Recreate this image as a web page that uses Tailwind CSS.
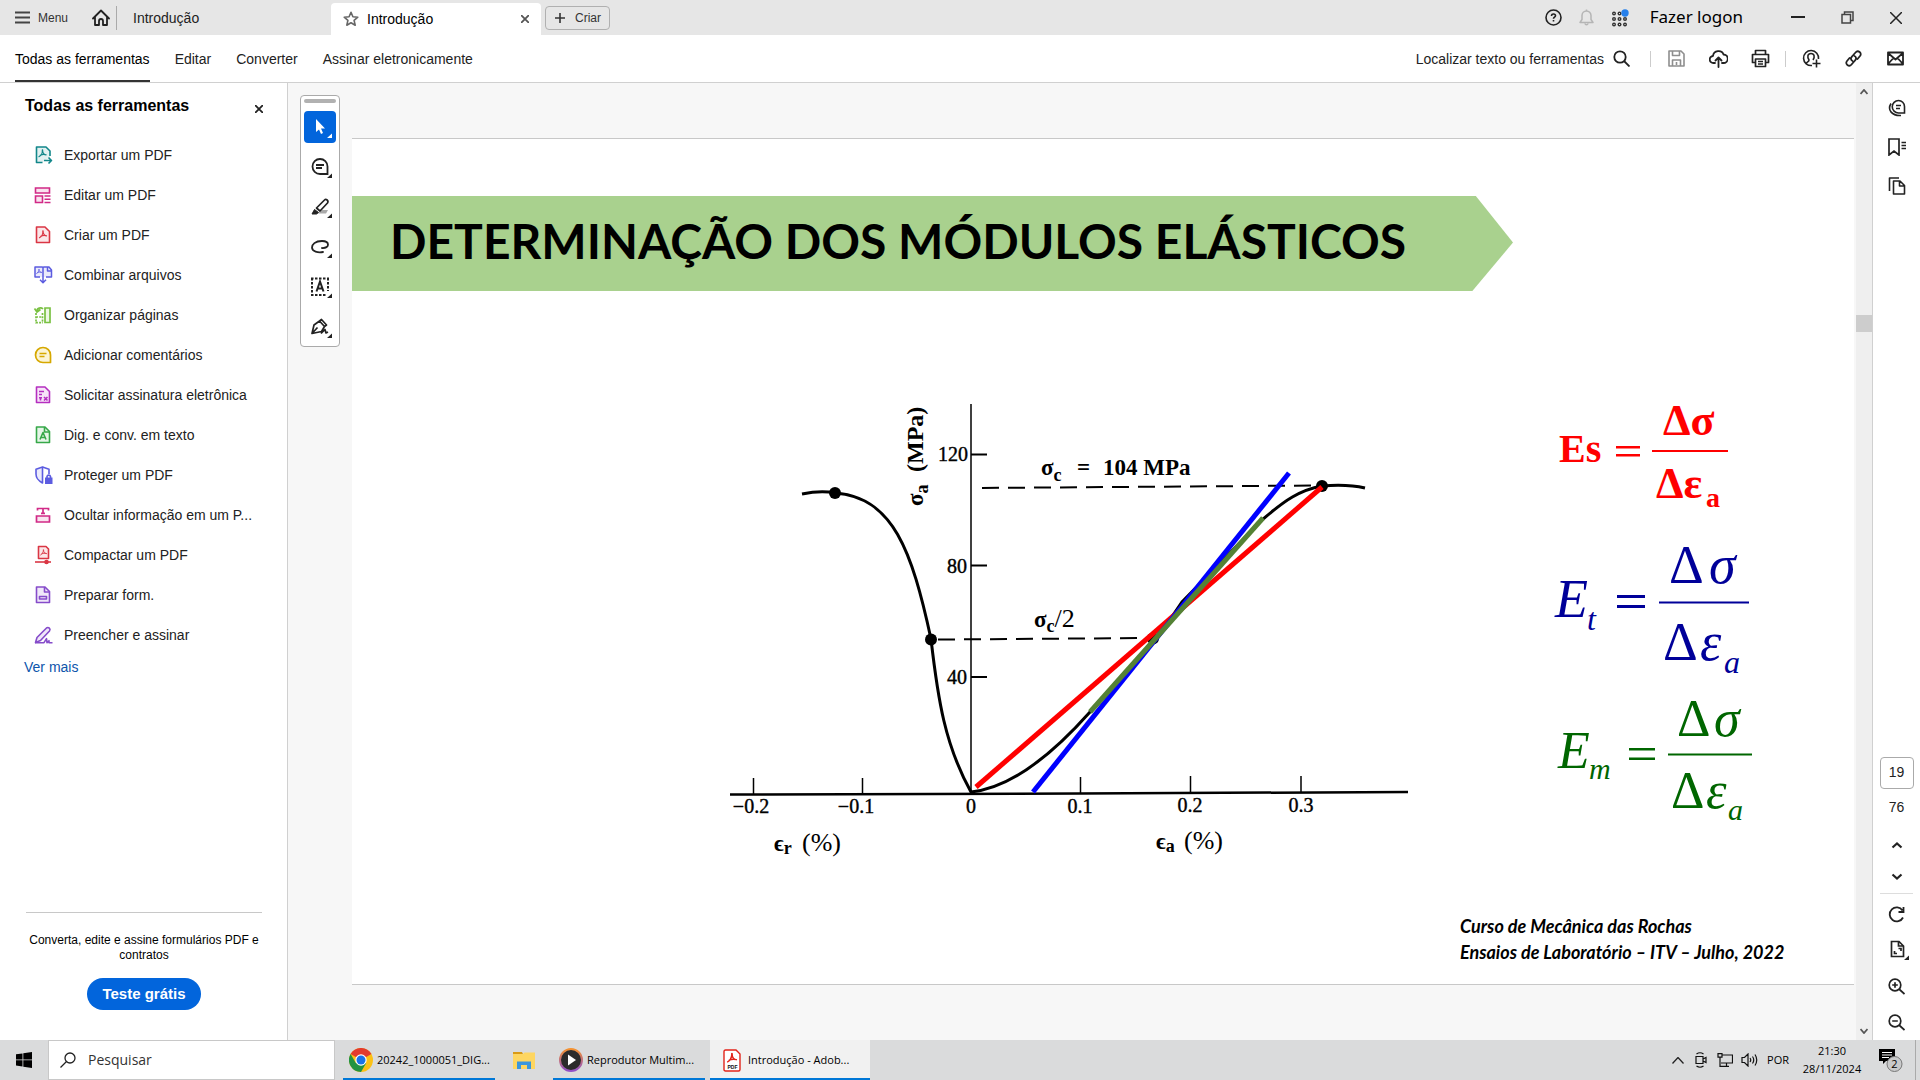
<!DOCTYPE html>
<html lang="pt-BR">
<head>
<meta charset="utf-8">
<title>Introdução</title>
<script src="https://cdn.jsdelivr.net/npm/@tailwindcss/browser@4"></script>
</head>
<body class="flex h-screen flex-col overflow-hidden bg-white font-['Liberation_Sans',sans-serif] text-sm text-[#222]">
<svg class="hidden" aria-hidden="true">
  <symbol id="acro" viewBox="0 0 10 10"><path d="M1 8.500C3 7.500 5 4.500 4.800 1.500C4.600 .5 5.400 .5 5.200 2C5 4.500 7 6.500 9 6.500M2.500 7C4.500 6 6.500 5.700 9 6.500" fill="none" stroke="currentColor" stroke-width="1.300" stroke-linecap="round"/></symbol>
</svg>

<header class="flex h-[35px] shrink-0 items-center bg-[#e6e6e6]">
  <button class="flex items-center gap-2 pl-[15px] text-xs text-[#333]">
    <svg class="size-[15px]" viewBox="0 0 15 15" fill="none" stroke="#444" stroke-width="2"><path d="M0 2.500h15M0 7.500h15M0 12.500h15"/></svg>Menu
  </button>
  <button class="ml-6 mr-[6px]" aria-label="Início">
    <svg class="size-[18px]" viewBox="0 0 18 18" fill="none" stroke="#222" stroke-width="1.800" stroke-linejoin="round" stroke-linecap="round"><path d="M1 9.500 9 1.500l8 8M3 8v8h4v-4a2 2 0 0 1 4 0v4h4V8"/></svg>
  </button>
  <nav class="flex h-full items-center self-stretch">
    <span class="h-6 w-px bg-[#aaa]"></span>
    <a href="#" class="w-[214px] pl-4 text-[#222]">Introdução</a>
    <a href="#" class="mt-[3px] flex h-8 w-[210px] items-center rounded-t bg-white pl-3 pr-3 text-black">
      <svg class="size-4" viewBox="0 0 16 16" fill="none" stroke="#666" stroke-width="1.600" stroke-linejoin="round"><path d="m8 1.300 1.900 4.500 4.900.4-3.700 3.200 1.100 4.800L8 11.700l-4.200 2.500 1.100-4.800L1.200 6.200l4.900-.4z"/></svg>
      <span class="ml-2">Introdução</span>
      <svg class="ml-auto size-2" viewBox="0 0 8 8" stroke="#555" stroke-width="1.800"><path d="m0 0 8 8M8 0 0 8"/></svg>
    </a>
  </nav>
  <button class="ml-1 flex h-6 w-[65px] items-center gap-[10px] rounded border border-[#b0b0b0] pl-[9px] text-xs text-[#333]">
    <svg class="size-[10px]" viewBox="0 0 10 10" stroke="#333" stroke-width="1.600"><path d="M5 0v10M0 5h10"/></svg>Criar
  </button>
  <div class="ml-auto flex items-center text-[#222]">
    <button class="mr-4" aria-label="Ajuda"><svg class="size-[17px]" viewBox="0 0 17 17" fill="none" stroke="currentColor" stroke-width="1.600"><circle cx="8.500" cy="8.500" r="7.500"/><path d="M6.500 7c0-2.800 4-2.500 4-.2 0 1.400-2 1.500-2 3M8.500 11v1.600"/></svg></button>
    <button class="mr-4" aria-label="Notificações"><svg class="size-[17px]" viewBox="0 0 17 17" fill="none" stroke="#b5b5b5" stroke-width="1.500" stroke-linejoin="round"><path d="M2 13.500h13l-2-3V6.500a4.500 4.500 0 0 0-9 0v4zM8.500 2V.5M7 14.500c.3 1.800 2.700 1.800 3 0"/></svg></button>
    <button class="mr-[21px]" aria-label="Aplicativos"><svg class="size-[18px]" viewBox="0 0 18 18" fill="#333"><g><circle cx="3" cy="4.500" r="2"/><circle cx="8.500" cy="4.500" r="2"/><circle cx="3" cy="10" r="2"/><circle cx="8.500" cy="10" r="2"/><circle cx="14" cy="10" r="2"/><circle cx="3" cy="15.500" r="2"/><circle cx="8.500" cy="15.500" r="2"/><circle cx="14" cy="15.500" r="2"/></g><path fill="#e6e6e6" d="M2.500 4h1v1h-1zM8 4h1v1H8zM2.500 9.500h1v1h-1zM8 9.500h1v1H8zM13.500 9.500h1v1h-1zM2.500 15h1v1h-1zM8 15h1v1H8zM13.500 15h1v1h-1z"/><circle cx="14" cy="4" r="3.700" fill="#2680eb"/></svg></button>
    <a href="#" class="mr-12 font-['Noto_Sans',sans-serif] text-[17px] text-black">Fazer logon</a>
    <button class="mr-9" aria-label="Minimizar"><svg class="size-[14px]" viewBox="0 0 14 14" stroke="#222" stroke-width="2"><path d="M0 6h14"/></svg></button>
    <button class="mr-9" aria-label="Restaurar"><svg class="size-[13px]" viewBox="0 0 13 13" fill="none" stroke="#444" stroke-width="1.500"><path d="M1 3.500h8.500V12H1zM3.500 3V1H12v8.500h-2.500"/></svg></button>
    <button class="mr-[18px]" aria-label="Fechar"><svg class="size-3" viewBox="0 0 12 12" stroke="#222" stroke-width="1.500"><path d="m0 0 12 12M12 0 0 12"/></svg></button>
  </div>
</header>

<div class="flex h-12 shrink-0 items-center border-b border-[#d0d0d0]">
  <nav class="ml-[15px] flex h-full items-center gap-[25px]">
    <a href="#" class="flex h-full items-center border-b-2 border-[#333] pt-[2px] text-black">Todas as ferramentas</a>
    <a href="#">Editar</a><a href="#">Converter</a><a href="#">Assinar eletronicamente</a>
  </nav>
  <div class="ml-auto flex h-full items-center pr-1">
    <button class="mr-5 flex items-center gap-[9px]">Localizar texto ou ferramentas
      <svg class="size-[17px]" viewBox="0 0 17 17" fill="none" stroke="#222" stroke-width="1.800"><circle cx="7" cy="7" r="5.700"/><path d="m11 11 5.500 5.500"/></svg></button>
    <span class="mr-1 h-4 w-px bg-[#ccc]"></span>
    <button class="flex w-[42px] justify-center" aria-label="Salvar"><svg class="size-[17px]" viewBox="0 0 17 17" fill="none" stroke="#8e8e8e" stroke-width="1.600" stroke-linejoin="round"><path d="M1 1h12l3 3v12H1zM4.500 1v4.500h7V1M4.500 16v-6h8v6M8.500 12v3"/></svg></button>
    <button class="flex w-[42px] justify-center" aria-label="Enviar para a nuvem"><svg class="size-[19px]" viewBox="0 0 19 19" fill="none" stroke="#222" stroke-width="1.800" stroke-linecap="round" stroke-linejoin="round"><path d="M6 14H4.500A3.500 3.500 0 0 1 4 7c.5-6 9-6.500 10.500-1.500A4 4 0 0 1 14.500 14H13M9.500 18V9M6.500 11.500l3-3 3 3"/></svg></button>
    <button class="flex w-[42px] justify-center" aria-label="Imprimir"><svg class="size-[19px]" viewBox="0 0 19 19" fill="none" stroke="#222" stroke-width="1.700" stroke-linejoin="round"><path d="M4.500 5.500v-4h10v4M4 13.500H1.500v-8h16v8H15M4.500 10h10v7.500h-10zM7 12.500h5M7 15h5"/></svg></button>
    <span class="mx-1 h-4 w-px bg-[#ccc]"></span>
    <button class="flex w-[42px] justify-center" aria-label="Compartilhar com pessoas"><svg class="size-[19px]" viewBox="0 0 19 19" fill="none" stroke="#222" stroke-width="1.600"><path d="M10 16.500A7.500 7.500 0 1 1 16.500 10M4 14.500c1-2 3-1.500 3-3.500C5 8 5.500 4.500 9 4.500s4 3.500 2 6.500M14.500 10.500v8M10.500 14.500h8"/></svg></button>
    <button class="flex w-[42px] justify-center" aria-label="Link"><svg class="size-[17px]" viewBox="0 0 17 17" fill="none" stroke="#222" stroke-width="1.800" stroke-linecap="round"><path d="M7.500 11C5.500 10 5.500 8 7 6.500l3.500-4C13-.5 17.500 3 15 6l-2.500 3M9.500 6c2 1 2 3 .5 4.500l-3.500 4C4 17.500-.5 14 2 11l2.500-3"/></svg></button>
    <button class="flex w-[42px] justify-center" aria-label="E-mail"><svg class="size-[17px]" viewBox="0 0 17 17" fill="none" stroke="#222" stroke-width="1.800" stroke-linejoin="round"><path d="M1 2.500h15v12H1zM1 3l7.500 6.500L16 3M1 14l5.500-6M16 14l-5.500-6"/></svg></button>
  </div>
</div>

<main class="flex min-h-0 flex-1">
  <aside class="flex w-[288px] shrink-0 flex-col border-r border-[#d0d0d0] px-6">
    <div class="flex h-[52px] items-center justify-between pb-[7px]">
      <h2 class="pl-[1px] text-base font-bold text-black">Todas as ferramentas</h2>
      <button class="pt-[6px]" aria-label="Fechar painel"><svg class="size-2" viewBox="0 0 8 8" stroke="#222" stroke-width="1.800"><path d="m0 0 8 8M8 0 0 8"/></svg></button>
    </div>
    <ul class="pl-[9px] [&_a]:flex [&_a]:h-10 [&_a]:items-center [&_a]:gap-[11px] [&_a]:whitespace-nowrap [&_svg]:size-5 [&_svg]:shrink-0">
      <li><a href="#"><svg class="text-[#12878a]" viewBox="0 0 20 20" fill="none" stroke="currentColor" stroke-width="1.600" stroke-linejoin="round"><path fill="#e3f1f1" stroke="none" d="M3.500 2H13l4 4v6l-7 5H3.500z"/><path d="M9.500 17.500H3.500V2H13l4 4v5"/><use href="#acro" x="5" y="4" width="9" height="9"/><path d="M11 15.500h7M15.500 12.500l3 3-3 3"/></svg>Exportar um PDF</a></li>
      <li><a href="#"><svg class="text-[#d12a87]" viewBox="0 0 20 20" fill="none" stroke="currentColor" stroke-width="1.600"><path fill="#f9e3ef" d="M2.500 3h14v5h-14zM2.500 11h7v6.500h-7z"/><path d="M11.500 11h6M11.500 14.200h6M11.500 17.500h6"/></svg>Editar um PDF</a></li>
      <li><a href="#"><svg class="text-[#da3644]" viewBox="0 0 20 20" fill="none" stroke="currentColor" stroke-width="1.600" stroke-linejoin="round"><path fill="#fbe6e8" d="M3.500 2H12l4.500 4.500V17.500h-13z"/><use href="#acro" x="5.500" y="5" width="9" height="9"/></svg>Criar um PDF</a></li>
      <li><a href="#"><svg class="text-[#5c5ce0]" viewBox="0 0 20 20" fill="none" stroke="currentColor" stroke-width="1.500" stroke-linejoin="round"><path fill="#ebebfb" stroke="none" d="M2 2h14.500l2 3v7H2z"/><path d="M7 12H2V2h7.500l.5 1 .5-1H16l2.500 3v7H13M10 3v14.500M7 14.800l3 3 3-3M14.500 2v4h4"/><use href="#acro" x="3" y="3.500" width="6" height="6"/></svg>Combinar arquivos</a></li>
      <li><a href="#"><svg class="text-[#7ac143]" viewBox="0 0 20 20" fill="none" stroke="currentColor" stroke-width="1.700"><path fill="#eef8e6" d="M12 3h5v14.500h-5z"/><path d="M4 6c0-3 4-4 6-2M1.500 3.500 4 7l3.500-2.500"/><path stroke-dasharray="2 1.200" d="M3 8v9.700h7M3 12h7M9.500 8v9"/></svg>Organizar páginas</a></li>
      <li><a href="#"><svg class="text-[#d6a800]" viewBox="0 0 20 20" fill="none" stroke="currentColor" stroke-width="1.700" stroke-linejoin="round"><path fill="#fbf4d6" d="M10 2.500a7.500 7.500 0 0 0 0 15h7.500V10A7.500 7.500 0 0 0 10 2.500z"/><path d="M6.500 8.500h7M6.500 11.500h5"/></svg>Adicionar comentários</a></li>
      <li><a href="#"><svg class="text-[#b52fc0]" viewBox="0 0 20 20" fill="none" stroke="currentColor" stroke-width="1.600" stroke-linejoin="round"><path fill="#f7e4f8" d="M3.500 2H12l4.500 4.500V17.500h-13z"/><path d="M6 6.500h5M6 9.500h3M11 12l3.500 3.500M14.500 12 11 15.500M6 12.800h3M7.500 12v3.500" /></svg>Solicitar assinatura eletrônica</a></li>
      <li><a href="#"><svg class="text-[#37a849]" viewBox="0 0 20 20" fill="none" stroke="currentColor" stroke-width="1.600" stroke-linejoin="round"><path fill="#e6f5e8" d="M3.500 2H12l4.500 4.500V17.500h-13z"/><path d="M11.500 2v5h5M7 14.500l3-7 3 7M8 12.500h4"/></svg>Dig. e conv. em texto</a></li>
      <li><a href="#"><svg class="text-[#5c5ce0]" viewBox="0 0 20 20" fill="none" stroke="currentColor" stroke-width="1.600" stroke-linejoin="round"><path fill="#ebebfb" d="M9.500 18C4.500 15 3 13 3 9V4.200L9.500 2z"/><path d="M9.500 2 16 4.200V9"/><path d="M14 13v-1.500a1.800 1.800 0 0 1 3.500 0V13"/><path fill="currentColor" stroke="none" d="M12 12.500h7.500V19H12z"/></svg>Proteger um PDF</a></li>
      <li><a href="#"><svg class="text-[#d12a87]" viewBox="0 0 20 20" fill="none" stroke="currentColor" stroke-width="1.700"><path d="M4.500 5.500V3.500h11v2M10 3.500V8M8 8.300h4"/><path fill="#f9e3ef" d="M3.500 11h13v6h-13z"/></svg>Ocultar informação em um P...</a></li>
      <li><a href="#"><svg class="text-[#da3644]" viewBox="0 0 20 20" fill="none" stroke="currentColor" stroke-width="1.600" stroke-linejoin="round"><path fill="#fbe6e8" d="M5.500 1.500H13L15.500 4v9.500h-10z"/><use href="#acro" x="7" y="4" width="7" height="7"/><path d="M2 17h16"/><circle cx="13.500" cy="17" r="1.500" fill="currentColor"/></svg>Compactar um PDF</a></li>
      <li><a href="#"><svg class="text-[#864cca]" viewBox="0 0 20 20" fill="none" stroke="currentColor" stroke-width="1.600" stroke-linejoin="round"><path fill="#f0e8f9" d="M3.500 2H12l4.500 4.500V17.500h-13z"/><path d="M11.500 2v5h5M6.500 11.500h7V14h-7z"/></svg>Preparar form.</a></li>
      <li><a href="#"><svg class="text-[#864cca]" viewBox="0 0 20 20" fill="none" stroke="currentColor" stroke-width="1.600" stroke-linejoin="round"><path fill="#f0e8f9" d="M2.500 17.500 4 12.500 13.500 3C15.500 1.500 18 4 16.500 6L7.500 15.500z"/><path d="M2 17.700h9l2.500-4 .5 4 2-2v2h3.500"/></svg>Preencher e assinar</a></li>
    </ul>
    <a href="#" class="mt-[2px] text-[#0d55ab]">Ver mais</a>
    <div class="mt-auto ml-[2px] mb-[30px] flex w-[236px] flex-col items-center border-t border-[#c8c8c8] pt-5 text-center text-xs text-black">
      <p class="-mx-2 leading-[15px]">Converta, edite e assine formulários PDF e<br>contratos</p>
      <button class="mt-[15px] h-8 w-[114px] rounded-full bg-[#0265dc] text-[15px] font-bold text-white">Teste grátis</button>
    </div>
  </aside>

  <section class="flex min-w-0 flex-1 bg-[#f7f7f7]">
    <div class="w-16 shrink-0 pt-3 pl-3">
      <div class="flex h-[252px] w-10 flex-col items-center gap-2 rounded border border-[#aaa] bg-white pt-[3px] text-[#222] [&_button]:flex [&_button]:size-8 [&_button]:shrink-0 [&_button]:items-center [&_button]:justify-center [&_svg]:size-6" role="toolbar">
        <span class="h-1 w-8 shrink-0 rounded-sm bg-[#b1b1b1]"></span>
        <button class="rounded-sm bg-[#0265dc] text-white" aria-label="Selecionar"><svg viewBox="0 0 24 24" fill="currentColor"><path d="M8 4v13l3-2.500 2 4.500 2-1-2-4.500h4zM24 18.500V23h-5z"/></svg></button>
        <button aria-label="Comentário"><svg viewBox="0 0 24 24" fill="none" stroke="currentColor" stroke-width="1.800"><path d="M12 4a7.500 7.500 0 0 0 0 15h7.500v-7.500A7.500 7.500 0 0 0 12 4zM8 10h8M8 13h6"/><path fill="currentColor" stroke="none" d="M24 18.500V23h-5z"/></svg></button>
        <button aria-label="Realçar"><svg viewBox="0 0 24 24" fill="none" stroke="currentColor" stroke-width="1.700" stroke-linejoin="round"><path fill="#aaa" stroke="none" d="m14 15 6 0-2 3.500h-8z"/><path fill="#fff" d="m8.500 13 8-8c1.500-1.500 4.500.5 3 3l-7.500 8z"/><path fill="currentColor" stroke-width="1" d="m4 19 2.500-4.500 4 3-2 1.500z"/><path fill="currentColor" stroke="none" d="M24 18.500V23h-5z"/></svg></button>
        <button aria-label="Desenhar"><svg viewBox="0 0 24 24" fill="none" stroke="currentColor" stroke-width="1.800" stroke-linecap="round"><path d="M14 13c8 .5 8-7 0-7-7 0-10 3.500-10 6.500 0 4 6 5.500 11 4.500"/><path fill="currentColor" stroke="none" d="M24 18.500V23h-5z"/></svg></button>
        <button aria-label="Texto"><svg viewBox="0 0 24 24" fill="none" stroke="currentColor" stroke-width="2"><path stroke-dasharray="2.500 1.500" d="M3 3.500h18M3 20h15M4 3v17M20 3v13"/><path d="m8.500 16.500 3.500-10 3.500 10M10 13.500h4"/><path fill="currentColor" stroke="none" d="M24 18.500V23h-5z"/></svg></button>
        <button aria-label="Assinar"><svg viewBox="0 0 24 24" fill="none" stroke="currentColor" stroke-width="1.700" stroke-linejoin="round"><path d="M4 18.500 6 10l5.500-4 5 5.500-3 5zM4 18.500l5.500-6M11.500 6l2-1.500 5 5.500-2 1.500M13 18.500l4-4 1 3.500 2-1"/><path fill="currentColor" stroke="none" d="M24 18.500V23h-5z"/></svg></button>
      </div>
    </div>

    <article class="mt-[55px] mb-[55px] flex min-w-0 flex-1 flex-col border-y border-[#c8c8c8] bg-white pt-[57px] text-black">
      <h1 class="flex h-[95px] w-[1161px] items-center bg-[#a9d18e] pb-[5px] pl-[38px] font-['Lato',sans-serif] text-[48px] font-bold whitespace-nowrap [clip-path:polygon(0_0,96.8%_0,100%_49%,96.500%_100%,0_100%)]">DETERMINAÇÃO DOS MÓDULOS ELÁSTICOS</h1>
      <div class="mt-[104px] flex pl-[368px] font-['Liberation_Serif',serif]">
        <svg class="h-[470px] w-[700px] shrink-0" viewBox="720 395 700 470" fill="none" stroke="#000" role="img" aria-label="Curvas de tensão e deformação">
          <path stroke-width="1.500" d="M971 404V794"/>
          <path stroke-width="2.500" d="M730 794.500 1080 793.500 1408 792"/>
          <path stroke-width="2" d="M971 454.500h16M971 565.500h16M971 677h16"/>
          <path stroke-width="1.500" d="M753.500 778v16M862.500 778v16M1080.500 777v16M1190.500 776v16M1301 776v16"/>
          <path stroke-width="2" stroke-dasharray="17 9" d="M982 488 1318 485.500M938 639.500 1150 638"/>
          <path stroke-width="3" d="M802 494C812 492 825 491 835 493C893 497 912 551 931 639C938 700 945 745 971 792C1010 788 1050 757 1090 712L1156 640L1182 602L1262 520C1285 500 1300 490 1322 486C1335 485 1352 485 1365 488"/>
          <g fill="#000" stroke="none"><circle cx="835" cy="493" r="6"/><circle cx="931" cy="639.500" r="6"/><circle cx="1322" cy="486" r="6"/><circle cx="1153" cy="638.500" r="6"/></g>
          <path stroke="#f00" stroke-width="5" d="M976 787 1322 487"/>
          <path stroke="#00f" stroke-width="5" d="M1033 792 1289 473"/>
          <path stroke="#548235" stroke-width="5" d="M1090 712 1263 518"/>
          <g fill="#000" stroke-width=".4" font-size="20" text-anchor="middle">
            <text x="751" y="813">−0.2</text><text x="856" y="813">−0.1</text><text x="971" y="813">0</text><text x="1080" y="813">0.1</text><text x="1190" y="812">0.2</text><text x="1301" y="812">0.3</text>
            <g text-anchor="end"><text x="968" y="461">120</text><text x="967" y="573">80</text><text x="967" y="684">40</text></g>
          </g>
          <g fill="#000" stroke="none" font-size="23" font-weight="bold">
            <text x="1041" y="475">σ<tspan font-size="18" dy="6">c</tspan></text><text x="1077" y="475">=</text><text x="1103" y="475">104 MPa</text>
            <text x="1034" y="627">σ<tspan font-size="18" dy="5">c</tspan><tspan dy="-5" font-size="26" font-weight="normal">/2</tspan></text>
            <text x="774" y="851">ϵ<tspan font-size="18" dy="3">r</tspan></text><text x="802" y="851" font-weight="normal" font-size="26">(%)</text>
            <text x="1156" y="849">ϵ<tspan font-size="18" dy="3">a</tspan></text><text x="1184" y="849" font-weight="normal" font-size="26">(%)</text>
            <text transform="translate(923 506) rotate(-90)">σ<tspan font-size="18" dy="5">a</tspan><tspan dy="-5" x="34" font-size="24">(MPa)</tspan></text>
          </g>
        </svg>
        <svg class="ml-[110px] h-[430px] w-[250px] shrink-0" viewBox="1530 395 250 430" stroke="none" role="img" aria-label="Fórmulas dos módulos elásticos">
          <g fill="#f00" font-weight="bold" font-size="44">
            <text x="1559" y="462" font-size="40">Es</text>
            <path d="M1616 446h24v2.500h-24zM1616 454h24v2.500h-24zM1652 450h76v2h-76z"/>
            <text x="1663" y="435">Δσ</text><text x="1656" y="498">Δε</text><text x="1706" y="507" font-size="28">a</text>
          </g>
          <g fill="#009" font-size="54">
            <text x="1555" y="617" font-style="italic">E</text><text x="1587" y="630" font-size="32" font-style="italic">t</text>
            <path d="M1617 595h28v3h-28zM1617 605h28v3h-28zM1659 601.500h90v2h-90z"/>
            <text x="1669" y="583">Δ</text><text x="1709" y="583" font-style="italic">σ</text>
            <text x="1663" y="660">Δ</text><text x="1700" y="660" font-style="italic">ε</text><text x="1724" y="673" font-size="32" font-style="italic">a</text>
          </g>
          <g fill="#060" font-size="52">
            <text x="1558" y="768" font-style="italic">E</text><text x="1589" y="779" font-size="30" font-style="italic">m</text>
            <path d="M1629 748h26v2.500h-26zM1629 757.500h26v2.500h-26zM1668 753.500h84v2h-84z"/>
            <text x="1677" y="736">Δ</text><text x="1714" y="736" font-style="italic">σ</text>
            <text x="1671" y="808">Δ</text><text x="1706" y="808" font-style="italic">ε</text><text x="1728" y="820" font-size="30" font-style="italic">a</text>
          </g>
        </svg>
      </div>
      <footer class="mt-auto mr-[64px] mb-[19px] w-[330px] self-end font-['Lato',sans-serif] text-[18px] leading-[26px] font-bold whitespace-nowrap italic">
        <p>Curso de Mecânica das Rochas</p>
        <p>Ensaios de Laboratório – ITV – Julho, 2022</p>
      </footer>
    </article>

    <div class="ml-[2px] flex w-4 shrink-0 flex-col items-center bg-[#efefef] py-[6px]">
      <svg class="h-[6px] w-2" viewBox="0 0 8 6" fill="none" stroke="#555" stroke-width="1.800"><path d="m.5 5 3.500-4 3.500 4"/></svg>
      <span class="mt-[220px] h-[17px] w-full bg-[#cdcdcd]"></span>
      <svg class="mt-auto h-[6px] w-2" viewBox="0 0 8 6" fill="none" stroke="#555" stroke-width="1.800"><path d="m.5 1 3.500 4 3.500-4"/></svg>
    </div>
  </section>

  <aside class="flex w-12 shrink-0 flex-col items-center border-l border-[#d0d0d0] text-[#222] [&_button]:flex [&_button]:w-full [&_button]:shrink-0 [&_button]:items-center [&_button]:justify-center">
    <div class="flex flex-col gap-[3px] self-stretch pt-[7px]">
      <button class="h-9" aria-label="Comentários"><svg class="size-[18px]" viewBox="0 0 18 18" fill="none" stroke="currentColor" stroke-width="1.600"><path d="M10.500 1.500a6 6 0 0 0 0 12.500h6V7.500a6 6 0 0 0-6-6zM8 6.500h5M8 9.500h4M3 4.500C-1 11 4 17 13 16.500"/></svg></button>
      <button class="h-9" aria-label="Marcadores"><svg class="size-[18px]" viewBox="0 0 18 18" fill="none" stroke="currentColor" stroke-width="1.700"><path d="M1 1h10v16l-5-4-5 4zM13.500 4.500H18M13.500 7.500H18M13.500 10.500H18"/></svg></button>
      <button class="h-9" aria-label="Páginas"><svg class="size-[18px]" viewBox="0 0 18 18" fill="none" stroke="currentColor" stroke-width="1.600" stroke-linejoin="round"><path d="M5.500 4h6.500l4.500 4.500v8.500h-11zM11.500 4v5h5M11 1H1.500v13"/></svg></button>
    </div>
    <input value="19" aria-label="Página atual" class="mt-auto h-8 w-[34px] shrink-0 rounded border border-[#aaa] bg-white pb-[2px] text-center text-sm leading-5">
    <span class="mt-[10px] leading-4">76</span>
    <div class="mt-[14px] self-stretch">
      <button class="h-8" aria-label="Página anterior"><svg class="h-2 w-3" viewBox="0 0 12 8" fill="none" stroke="currentColor" stroke-width="2.200"><path d="m1.500 6.500 4.500-4 4.500 4"/></svg></button>
      <button class="h-8" aria-label="Próxima página"><svg class="h-2 w-3" viewBox="0 0 12 8" fill="none" stroke="currentColor" stroke-width="2.200"><path d="m1.500 1.500 4.500 4 4.500-4"/></svg></button>
    </div>
    <div class="w-[33px] border-t border-[#ddd] pt-[2px]">
      <button class="h-9" aria-label="Girar"><svg class="size-[17px]" viewBox="0 0 17 17" fill="none" stroke="currentColor" stroke-width="1.800"><path d="M15 11.500A7 7 0 1 1 14.500 4.500M15.500 1v5h-5"/></svg></button>
      <button class="h-9" aria-label="Exibição da página"><svg class="ml-1 size-5 shrink-0" viewBox="0 0 20 20" fill="none" stroke="currentColor" stroke-width="1.700"><path d="M2.500 1.500H10l4.500 4.500v10.500h-12zM9.500 1.500V6h5M9.500 8.500H12V11M5.500 11v2.500H8"/><path fill="currentColor" stroke="none" d="M20 15.500V20h-5z"/></svg></button>
      <button class="h-9" aria-label="Mais zoom"><svg class="size-[17px]" viewBox="0 0 17 17" fill="none" stroke="currentColor" stroke-width="1.700"><circle cx="7" cy="7" r="5.800"/><path d="m11 11 5.500 5M7 4.200v5.600M4.200 7h5.600"/></svg></button>
      <button class="h-9" aria-label="Menos zoom"><svg class="size-[17px]" viewBox="0 0 17 17" fill="none" stroke="currentColor" stroke-width="1.700"><circle cx="7" cy="7" r="5.800"/><path d="m11 11 5.500 5M4.200 7h5.600"/></svg></button>
    </div>
  </aside>
</main>

<footer class="flex h-10 shrink-0 items-center bg-[#dadbdc] font-['Open_Sans',sans-serif] text-[11px] text-black">
  <button class="flex w-12 justify-center" aria-label="Iniciar"><svg class="size-4" viewBox="0 0 16 16"><path d="M0 2.300 6.500 1.400v6.100H0zM7.300 1.300 16 0v7.500H7.300zM0 8.300h6.500v6.200L0 13.600zM7.300 8.300H16V16l-8.700-1.300z"/></svg></button>
  <label class="flex h-10 w-[287px] items-center gap-3 border border-[#c8c8c8] bg-white pl-[11px]">
    <svg class="size-4" viewBox="0 0 16 16" fill="none" stroke="#222" stroke-width="1.300"><circle cx="10" cy="6" r="5"/><path d="M6.500 9.500.5 15.500"/></svg>
    <input type="search" placeholder="Pesquisar" aria-label="Pesquisar" class="w-40 bg-transparent text-sm outline-none placeholder:text-[#333]">
  </label>
  <nav class="flex h-full items-center [&_a]:flex [&_a]:h-full [&_a]:items-center [&_a]:whitespace-nowrap">
    <a href="#" class="ml-2 w-[152px] gap-1 border-b-2 border-[#0078d7] pt-[2px] pl-[6px]">
      <svg class="size-6 shrink-0" viewBox="0 0 24 24"><circle cx="12" cy="12" r="12" fill="#fbc116"/><path d="M12 12 1.600 6A12 12 0 0 1 22.400 6z" fill="#e33b2e"/><path d="M1.600 6A12 12 0 0 0 12 24l5.200-9L12 12 6.800 15z" fill="#229342"/><circle cx="12" cy="12" r="5.700" fill="#fff"/><circle cx="12" cy="12" r="4.500" fill="#1a73e8"/></svg>20242_1000051_DIG...</a>
    <a href="#" class="w-[58px] justify-center" aria-label="Explorador de Arquivos"><svg class="h-[19px] w-[22px]" viewBox="0 0 22 19"><path d="M0 1h9l1 2H0z" fill="#d99a16"/><path d="M0 3h10l1.500-1.500H22V18H0z" fill="#fed661"/><path d="M4 18v-7.500h14V18h-4v-4H8v4z" fill="#3a96dd"/></svg></a>
    <a href="#" class="w-[152px] gap-1 border-b-2 border-[#0078d7] pt-[2px] pl-[6px]">
      <svg class="size-6 shrink-0" viewBox="0 0 24 24"><defs><linearGradient id="ring" x2="0" y2="1"><stop stop-color="#f59331"/><stop offset="1" stop-color="#9050c8"/></linearGradient></defs><circle cx="12" cy="12" r="11" fill="#2b2b2b" stroke="url(#ring)" stroke-width="2"/><path d="M9 6.500v11l8-5.500z" fill="#fff"/></svg>Reprodutor Multim...</a>
    <a href="#" class="ml-[5px] w-40 gap-[7px] border-b-2 border-[#0078d7] bg-[#f1f1f1] pt-[2px] pl-[13px]">
      <svg class="h-[23px] w-[18px] shrink-0 text-[#e2241a]" viewBox="0 0 18 23"><path d="M1 2.500Q1 1 2.500 1H13l4 4v15.500q0 1.500-1.500 1.500h-13Q1 22 1 20.500z" fill="#fff" stroke="#e2241a" stroke-width="1.400"/><use href="#acro" x="3.500" y="3.500" width="11" height="11"/><text x="4.500" y="19.500" font-size="5" font-weight="bold" fill="#111" font-family="Liberation Sans">PDF</text></svg>Introdução - Adob...</a>
  </nav>
  <div class="ml-auto flex h-full items-center">
    <button class="mr-[11px]" aria-label="Ícones ocultos"><svg class="h-[7px] w-3" viewBox="0 0 12 7" fill="none" stroke="#222" stroke-width="1.300"><path d="m.5 6.500 5.500-6 5.500 6"/></svg></button>
    <button class="mr-[10px]" aria-label="Reunir agora"><svg class="h-4 w-3" viewBox="0 0 12 16" fill="none" stroke="#111" stroke-width="1.200"><path d="M1 4.500h7v7H1zM8 7l3-1.500v5L8 9M1.500 2q3.500-2.500 7 0M1.500 14q3.500 2.500 7 0"/></svg></button>
    <button class="mr-2" aria-label="Rede"><svg class="h-[14px] w-4" viewBox="0 0 16 14" fill="none" stroke="#111" stroke-width="1.200"><path d="M5 2h10.500v8H4M1 .6h4v3.500H1zM3 4v9.400h9M9.500 10v3"/></svg></button>
    <button class="mr-[9px]" aria-label="Volume"><svg class="h-[14px] w-[17px]" viewBox="0 0 17 14" fill="none" stroke="#111" stroke-width="1.200"><path d="M1 4.500h2.500L7 1v12L3.500 9.500H1zM9 5q1.500 2 0 4M11.500 3.500q2.500 3.500 0 7M14 1.500q3.500 5.500 0 11"/></svg></button>
    <span class="mr-[13px]">POR</span>
    <time class="w-[60px] text-center leading-[18px]">21:30<br>28/11/2024</time>
    <button class="ml-[17px] flex" aria-label="2 notificações"><svg class="h-6 w-6" viewBox="0 0 24 24"><path d="M0 1h16v12H7l-3 3v-3H0z"/><path stroke="#fff" stroke-width="1.200" d="M3 4.500h10M3 7h10M3 9.500h7"/><circle cx="15.500" cy="16" r="7.500" fill="#c9cacb" stroke="#777"/><text x="15.500" y="20" text-anchor="middle" font-size="11">2</text></svg></button>
    <span class="ml-3 h-full w-[5px] border-l border-[#aaa]"></span>
  </div>
</footer>
</body>
</html>
